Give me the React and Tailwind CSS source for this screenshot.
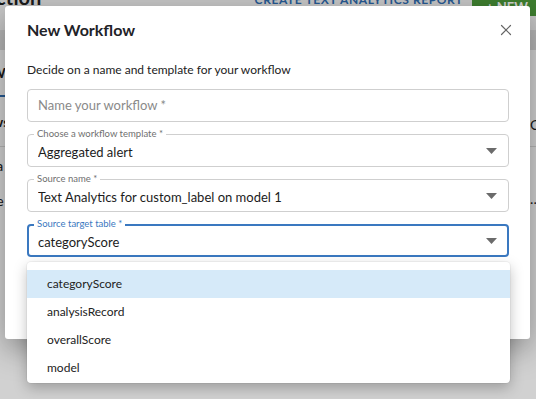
import { X } from 'lucide-react'

const FONT = { fontFamily: 'Lato, "Open Sans", sans-serif' }

const MENU_ITEMS = ['categoryScore', 'analysisRecord', 'overallScore', 'model']

function Caret() {
  return (
    <svg width="11" height="6" viewBox="0 0 11 6" className="shrink-0">
      <polygon points="0,0 11,0 5.5,6" fill="#6b6b6b" />
    </svg>
  )
}

function SelectField({ label, value, focused }) {
  return (
    <div
      className={`relative h-[33px] rounded-[4px] flex items-center ${
        focused ? 'border-2 border-[#3a78c0] pl-[9px] pr-[10px]' : 'border border-[#cfcfcf] pl-[10px] pr-[11px]'
      }`}>
      <span
        className={`absolute bg-white px-[3px] text-[9.5px] leading-[12px] ${
          focused ? 'text-[#3a78c0] -top-[8px] left-[5px]' : 'text-[#6f6f6f] -top-[7px] left-[6px]'
        }`}>
        {label}
      </span>
      <span className="flex-1 text-[13px] leading-[18px] text-[#1c1c1c] pt-[3px] truncate">{value}</span>
      <Caret />
    </div>
  )
}

export default function App() {
  return (
    <div className="relative w-[536px] h-[399px] overflow-hidden bg-white" style={FONT}>
      {/* ── Page behind the modal ─────────────────────────────── */}
      <div className="flex flex-col text-[14px] text-[#222]">
        <div className="h-[16px] flex items-end justify-between bg-[#f2f2f2]">
          <span className="-ml-[4px] mb-[9px] text-[20px] leading-[20px] font-bold">ction</span>
          <div className="flex items-end h-full">
            <span className="mb-[9px] mr-[9px] text-[12px] leading-[14px] font-bold tracking-[0.6px] text-[#2f6db3]">
              CREATE TEXT ANALYTICS REPORT
            </span>
            <span className="h-[16px] w-[64px] bg-[#4c9a3a] text-white text-[13px] leading-[14px] font-bold pl-[14px] -mt-[4px]">
              + NEW
            </span>
          </div>
        </div>
        <div className="h-[14px] bg-[#f2f2f2]" />
        <div className="h-[20px] bg-[#dedede]" />
        <div className="h-[47px] flex items-center border-b-2 border-[#2f6db3] w-[60px] font-bold">
          <span className="-ml-[9px]">W</span>
        </div>
        <div className="h-[50px] flex items-center font-bold border-b border-[#ddd]">
          <span className="-ml-[8px]">ws</span>
        </div>
        <div className="h-[36px] flex items-center">
          <span className="-ml-[7px]">la</span>
        </div>
        <div className="h-[34px] flex items-center">
          <span className="-ml-[7px]">le</span>
        </div>
      </div>
      <div className="absolute right-0 top-[114px] w-[6px] text-[14px] text-[#222]">C</div>
      <div className="absolute right-0 top-[188px] w-[6px] text-[14px] text-[#222]">…</div>

      {/* ── Backdrop ─────────────────────────────────────────── */}
      <div className="absolute inset-0 bg-black/[0.18]" />

      {/* ── Dialog ───────────────────────────────────────────── */}
      <div className="absolute left-[5px] top-[6px] w-[525px] h-[333px] bg-white rounded-[3px] shadow-[0_10px_30px_rgba(0,0,0,0.35)] px-[22px] pt-[12px]">
        <div className="flex items-center justify-between h-[24px]">
          <h2 className="text-[16px] leading-[24px] font-bold text-[#1f2328]">New Workflow</h2>
          <X size={18} strokeWidth={1.6} className="text-[#666] -mr-[7px]" />
        </div>
        <p className="mt-[19px] text-[12px] leading-[18px] text-[#222]">
          Decide on a name and template for your workflow
        </p>
        <div className="mt-[10px] flex flex-col gap-[12px] w-[482px]">
          <div className="h-[33px] rounded-[4px] border border-[#cfcfcf] flex items-center pl-[10px] text-[13px] text-[#8a8a8a]">
            Name your workflow *
          </div>
          <SelectField label="Choose a workflow template *" value="Aggregated alert" />
          <SelectField label="Source name *" value="Text Analytics for custom_label on model 1" />
          <SelectField label="Source target table *" value="categoryScore" focused />
        </div>
      </div>

      {/* ── Open select menu ─────────────────────────────────── */}
      <div className="absolute left-[27px] top-[262px] w-[483px] h-[121px] overflow-hidden bg-white rounded-[4px] shadow-[0_5px_14px_rgba(0,0,0,0.25),0_0_0_1px_rgba(0,0,0,0.04)] pt-[8px]">
        {MENU_ITEMS.map((item, i) => (
          <div
            key={item}
            className={`h-[28px] flex items-center pl-[20px] text-[12px] text-[#222] ${
              i === 0 ? 'bg-[#d6eaf9]' : ''
            }`}>
            {item}
          </div>
        ))}
      </div>
    </div>
  )
}
